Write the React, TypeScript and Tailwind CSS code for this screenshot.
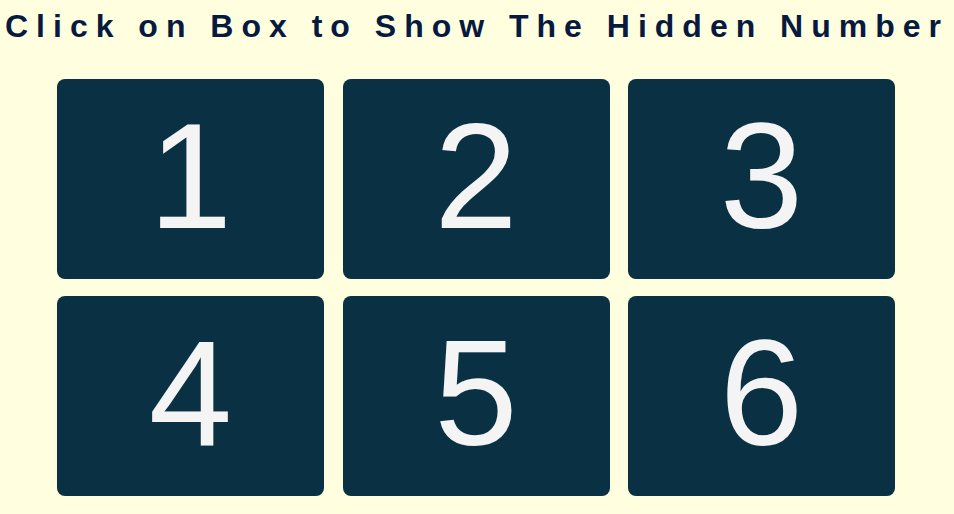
const numbers = [1, 2, 3, 4, 5, 6];

export default function App() {
  return (
    <main className="min-h-screen bg-[#ffffe0] pt-[8px] font-['Liberation_Sans',Arial,sans-serif]">
      <h1 className="text-center text-[32px] font-bold tracking-[8px] text-[#061a40] leading-[37px] whitespace-nowrap">
        Click on Box to Show The Hidden Number
      </h1>

      {/* Boxes */}
      <div className="mt-[34px] pr-[2px] grid grid-cols-[repeat(3,267px)] justify-center gap-x-[18.5px] gap-y-[17px]">
        {numbers.map((n) => (
          <button
            key={n}
            className="flex h-[200px] items-center justify-center rounded-lg bg-[#0a3043] pb-[6px] text-[150px] leading-none text-[#f4f4f4]"
          >
            {n}
          </button>
        ))}
      </div>
    </main>
  );
}
